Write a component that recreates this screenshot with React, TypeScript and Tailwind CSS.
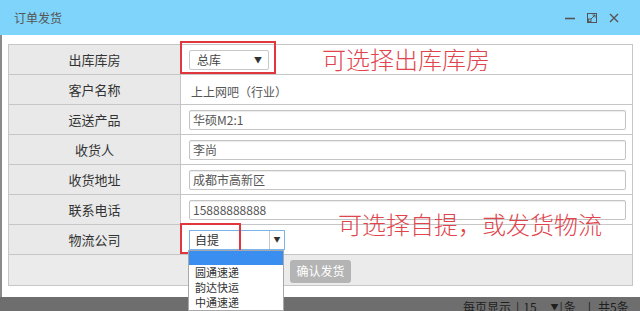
import React from 'react';

const cjk = "font-['Noto_Sans_CJK_SC',sans-serif]";

const rows = [
  { label: '出库库房', kind: 'select' },
  { label: '客户名称', kind: 'text', value: '上上网吧（行业）' },
  { label: '运送产品', kind: 'input', value: '华硕M2:1' },
  { label: '收货人', kind: 'input', value: '李尚' },
  { label: '收货地址', kind: 'input', value: '成都市高新区' },
  { label: '联系电话', kind: 'input', value: '15888888888' },
  { label: '物流公司', kind: 'logistics' },
];

const WindowButtons = () => (
  <div className="flex items-center gap-[10px] text-[#555]">
    <svg width="12" height="12" viewBox="0 0 12 12">
      <path d="M1 6.5h10" stroke="currentColor" strokeWidth="1.6" />
    </svg>
    <svg width="12" height="12" viewBox="0 0 12 12" fill="none" stroke="currentColor">
      <rect x="1.5" y="1.5" width="9" height="9" strokeWidth="1" />
      <path d="M5 7l4-4M6.5 3H9v2.5" strokeWidth="1" />
      <rect x="2.5" y="7" width="2.5" height="2.5" strokeWidth="0.9" />
    </svg>
    <svg width="12" height="12" viewBox="0 0 12 12">
      <path d="M2 2l8 8M10 2l-8 8" stroke="currentColor" strokeWidth="1.4" />
    </svg>
  </div>
);

const Cell = ({ kind, value }: { kind: string; value?: string }) => {
  if (kind === 'select') {
    return (
      <div className="flex h-[20px] w-[80px] items-center justify-between rounded-[2px] border border-[#c8c8c8] bg-white pl-[7px] pr-[6px] text-[12px] text-[#444]">
        <span>总库</span>
        <span className="text-[8px] text-[#333]">▼</span>
      </div>
    );
  }
  if (kind === 'text') {
    return <span className="pl-[2px] text-[12px] text-[#555]">{value}</span>;
  }
  if (kind === 'logistics') {
    return (
      <div className="flex h-[20px] w-[96px] items-stretch border border-[#7ab4e8] bg-white text-[12px] text-[#333]">
        <span className="flex flex-1 items-center pl-[5px]">自提</span>
        <span className="flex w-[15px] items-center justify-center border-l border-[#c8c8c8] text-[7px] text-[#333]">▼</span>
      </div>
    );
  }
  return (
    <div className="flex h-[20px] w-[437px] items-center rounded-[2px] border border-[#c4c4c4] bg-white pl-[3px] text-[12px] text-[#555] shadow-[inset_0_1px_1px_rgba(0,0,0,0.08)]">
      {value}
    </div>
  );
};

export default function App() {
  return (
    <div className={`relative flex h-[311px] w-[640px] flex-col overflow-hidden bg-white ${cjk}`}>
      {/* title bar */}
      <div className="flex h-[35px] shrink-0 items-center justify-between bg-[#7fd4fb] pl-[14px] pr-[20px]">
        <span className="text-[12px] text-[#555]">订单发货</span>
        <WindowButtons />
      </div>

      {/* body */}
      <div className="flex h-[262px] shrink-0">
        <div className="w-[2px] bg-[#8a8a8a]" />
        <div className="flex-1 bg-white pl-[6px] pt-[9px]">
          <table className="w-[625px] border-collapse border border-[#c6c6c6]">
            <tbody>
              {rows.map((r) => (
                <tr key={r.label} className="h-[30px] border-b border-[#c6c6c6]">
                  <td className="w-[172px] border-r border-[#c6c6c6] bg-[#e9e9e9] text-center text-[13px] text-[#333]">
                    {r.label}
                  </td>
                  <td className="pl-[8px]">
                    <Cell kind={r.kind} value={r.value} />
                  </td>
                </tr>
              ))}
              <tr className="h-[31px] bg-[#ebebeb]">
                <td colSpan={2} className="text-center">
                  <button className="h-[23px] rounded-[3px] bg-[#b4b4b4] px-[6px] text-[12px] text-white">
                    确认发货
                  </button>
                </td>
              </tr>
            </tbody>
          </table>
        </div>
      </div>

      {/* background page footer */}
      <div className="h-[14px] shrink-0 bg-[#6e6e6e]">
        <div className="ml-[463px] mt-[2px] flex whitespace-nowrap text-[12px] leading-[16px] text-[#1e1e1e]">
          <span>每页显示</span>
          <span className="ml-[5px]">|</span>
          <span className="ml-[4px]">15</span>
          <span className="ml-[14px] text-[8px]">▼</span>
          <span className="ml-[1px]">|</span>
          <span className="ml-[1px]">条</span>
          <span className="ml-[12px]">|</span>
          <span className="ml-[7px]">共5条</span>
        </div>
      </div>

      {/* annotations */}
      <div className="absolute left-[180px] top-[41px] h-[33px] w-[96px] border-2 border-[#e0373f]" />
      <div className="absolute left-[180px] top-[223px] h-[31px] w-[61px] border-2 border-[#e0373f]" />
      <div className="absolute left-[322px] top-[43px] text-[24px] font-light leading-[32px] text-[#e0454d]">
        可选择出库库房
      </div>
      <div className="absolute left-[338px] top-[208px] text-[24px] font-light leading-[32px] text-[#e0454d]">
        可选择自提，或发货物流
      </div>

      {/* open dropdown list */}
      <div className="absolute left-[188px] top-[250px] w-[96px] border border-[#a8a8a8] bg-white text-[11px] text-[#333]">
        <div className="h-[14px] bg-[#3a8ef0]" />
        <div className="flex h-[15px] items-center pl-[6px]">圆通速递</div>
        <div className="flex h-[15px] items-center pl-[6px]">韵达快运</div>
        <div className="flex h-[15px] items-center pl-[6px]">中通速递</div>
      </div>
    </div>
  );
}
